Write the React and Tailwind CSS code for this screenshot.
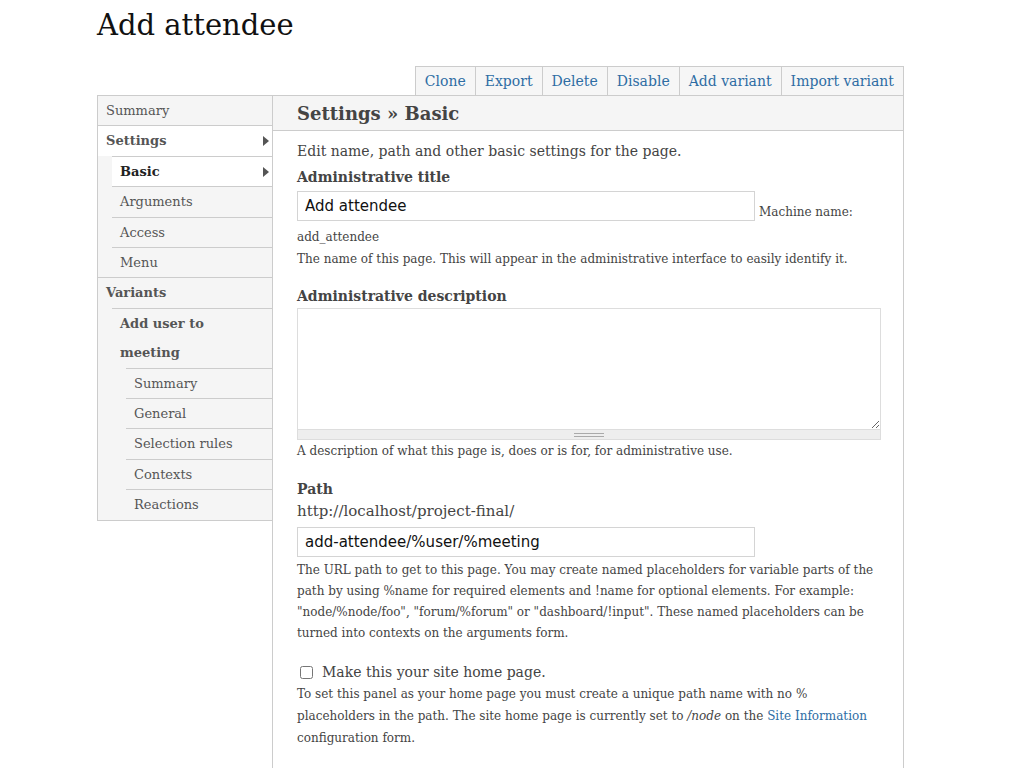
import React from 'react';

const serif = "font-['DejaVu_Serif','Liberation_Serif',serif]";

const tabs = ['Clone', 'Export', 'Delete', 'Disable', 'Add variant', 'Import variant'];

const navItems = [
  { label: 'Summary', level: 0 },
  { label: 'Settings', level: 0, bold: true, active: true, arrow: true },
  { label: 'Basic', level: 1, bold: true, active: true, arrow: true, dark: true },
  { label: 'Arguments', level: 1 },
  { label: 'Access', level: 1 },
  { label: 'Menu', level: 1 },
  { label: 'Variants', level: 0, bold: true },
  { label: 'Add user to meeting', level: 1, bold: true, wrap: true },
  { label: 'Summary', level: 2 },
  { label: 'General', level: 2 },
  { label: 'Selection rules', level: 2 },
  { label: 'Contexts', level: 2 },
  { label: 'Reactions', level: 2 },
];

function NavItem({ item, first }) {
  const indent = item.level === 0 ? 'ml-0 pl-[8px]' : item.level === 1 ? 'ml-[14px] pl-[8px]' : 'ml-[28px] pl-[8px]';
  return (
    <div className={`${indent} ${first ? '' : 'border-t border-[#cccccc]'} ${item.active ? 'bg-white' : ''}`}>
      <div
        className={`flex items-center justify-between pr-[2px] leading-[29.4px] ${item.bold ? 'font-bold' : ''} ${item.dark ? 'text-[#222222]' : 'text-[#555555]'} ${item.wrap ? 'w-[110px]' : ''} text-[13px]`}
      >
        <span>{item.label}</span>
        {item.arrow && (
          <svg width="6" height="10" viewBox="0 0 6 10" className="mr-[1px]">
            <path d="M0 0 L6 5 L0 10 Z" fill="#555555" />
          </svg>
        )}
      </div>
    </div>
  );
}

export default function App() {
  return (
    <div className={`min-h-[768px] bg-white ${serif} text-[#444444]`}>
      <div className="pl-[97px] w-[807px] box-content">
        <h1 className="text-[29px] leading-[36px] pt-[7px] text-[#111111]">Add attendee</h1>

        <div className="flex justify-end mt-[23px]">
          <div className="flex border border-[#cccccc] border-b-0 bg-[#f6f6f6]">
            {tabs.map((t, i) => (
              <a
                key={t}
                href="#"
                className={`px-[9px] leading-[28px] text-[14px] text-[#2e6da4] ${i > 0 ? 'border-l border-[#cccccc]' : ''}`}
              >
                {t}
              </a>
            ))}
          </div>
        </div>

        <div className="flex items-start">
          <div className="w-[176px] shrink-0 border border-[#cccccc] bg-[#f5f5f5]">
            {navItems.map((item, i) => (
              <NavItem key={i} item={item} first={i === 0} />
            ))}
          </div>

          <div className="flex-1 min-w-0 border-t border-[#cccccc] border-r border-[#cccccc] min-h-[673px] -ml-px border-l">
            <div className="bg-[#f5f5f5] border-b border-[#cccccc] h-[35px] flex items-center pl-[24px]">
              <h2 className="text-[18px] font-bold text-[#444444]">Settings » Basic</h2>
            </div>

            <div className="pl-[24px] pt-[9px] text-[14px]">
              <p className="leading-[22px] mb-[5px]">Edit name, path and other basic settings for the page.</p>
              <label className="block font-bold leading-[20px]">Administrative title</label>
              <div className="flex items-end mt-[4px]">
                <input
                  type="text"
                  defaultValue="Add attendee"
                  className="w-[458px] h-[30px] border border-[#d4d4d4] px-[7px] text-[15px] text-[#111111] font-['DejaVu_Sans',sans-serif] outline-none"
                />
                <span className="ml-[4px] text-[12px] leading-[18px] text-[#444444]">Machine name:</span>
              </div>
              <div className="text-[12px] leading-[22px] mt-[5px]">add_attendee</div>
              <div className="text-[12px] leading-[22px]">
                The name of this page. This will appear in the administrative interface to easily identify it.
              </div>

              <label className="block font-bold leading-[20px] mt-[16px]">Administrative description</label>
              <div className="mt-[2px] w-[584px]">
                <textarea className="block w-full h-[122px] border border-[#dddddd] resize-y outline-none" />
                <div className="h-[10px] bg-[#eeeeee] border border-t-0 border-[#dddddd] flex items-center justify-center">
                  <div className="w-[30px] h-[4px] border-t border-b border-[#aaaaaa]"></div>
                </div>
              </div>
              <div className="text-[12px] leading-[22px]">
                A description of what this page is, does or is for, for administrative use.
              </div>

              <label className="block font-bold leading-[20px] mt-[17px]">Path</label>
              <div className="text-[15px] leading-[24px]">http://localhost/project-final/</div>
              <input
                type="text"
                defaultValue="add-attendee/%user/%meeting"
                className="block mt-[4px] w-[458px] h-[30px] border border-[#d4d4d4] px-[7px] text-[15px] text-[#111111] font-['DejaVu_Sans',sans-serif] outline-none"
              />
              <div className="text-[12px] leading-[21px] mt-[3px] w-[586px]">
                The URL path to get to this page. You may create named placeholders for variable parts of the path by using %name for required elements and !name for optional elements. For example: "node/%node/foo", "forum/%forum" or "dashboard/!input". These named placeholders can be turned into contexts on the arguments form.
              </div>

              <label className="flex items-center mt-[17px] text-[14px] leading-[22px]">
                <input type="checkbox" className="w-[13px] h-[13px] mr-[9px] ml-[3px]" />
                Make this your site home page.
              </label>
              <div className="text-[12px] leading-[22px] w-[586px]">
                To set this panel as your home page you must create a unique path name with no % placeholders in the path. The site home page is currently set to <span className="italic">/node</span> on the{' '}
                <a href="#" className="text-[#2e6da4]">Site Information</a> configuration form.
              </div>
            </div>
          </div>
        </div>
      </div>
    </div>
  );
}
